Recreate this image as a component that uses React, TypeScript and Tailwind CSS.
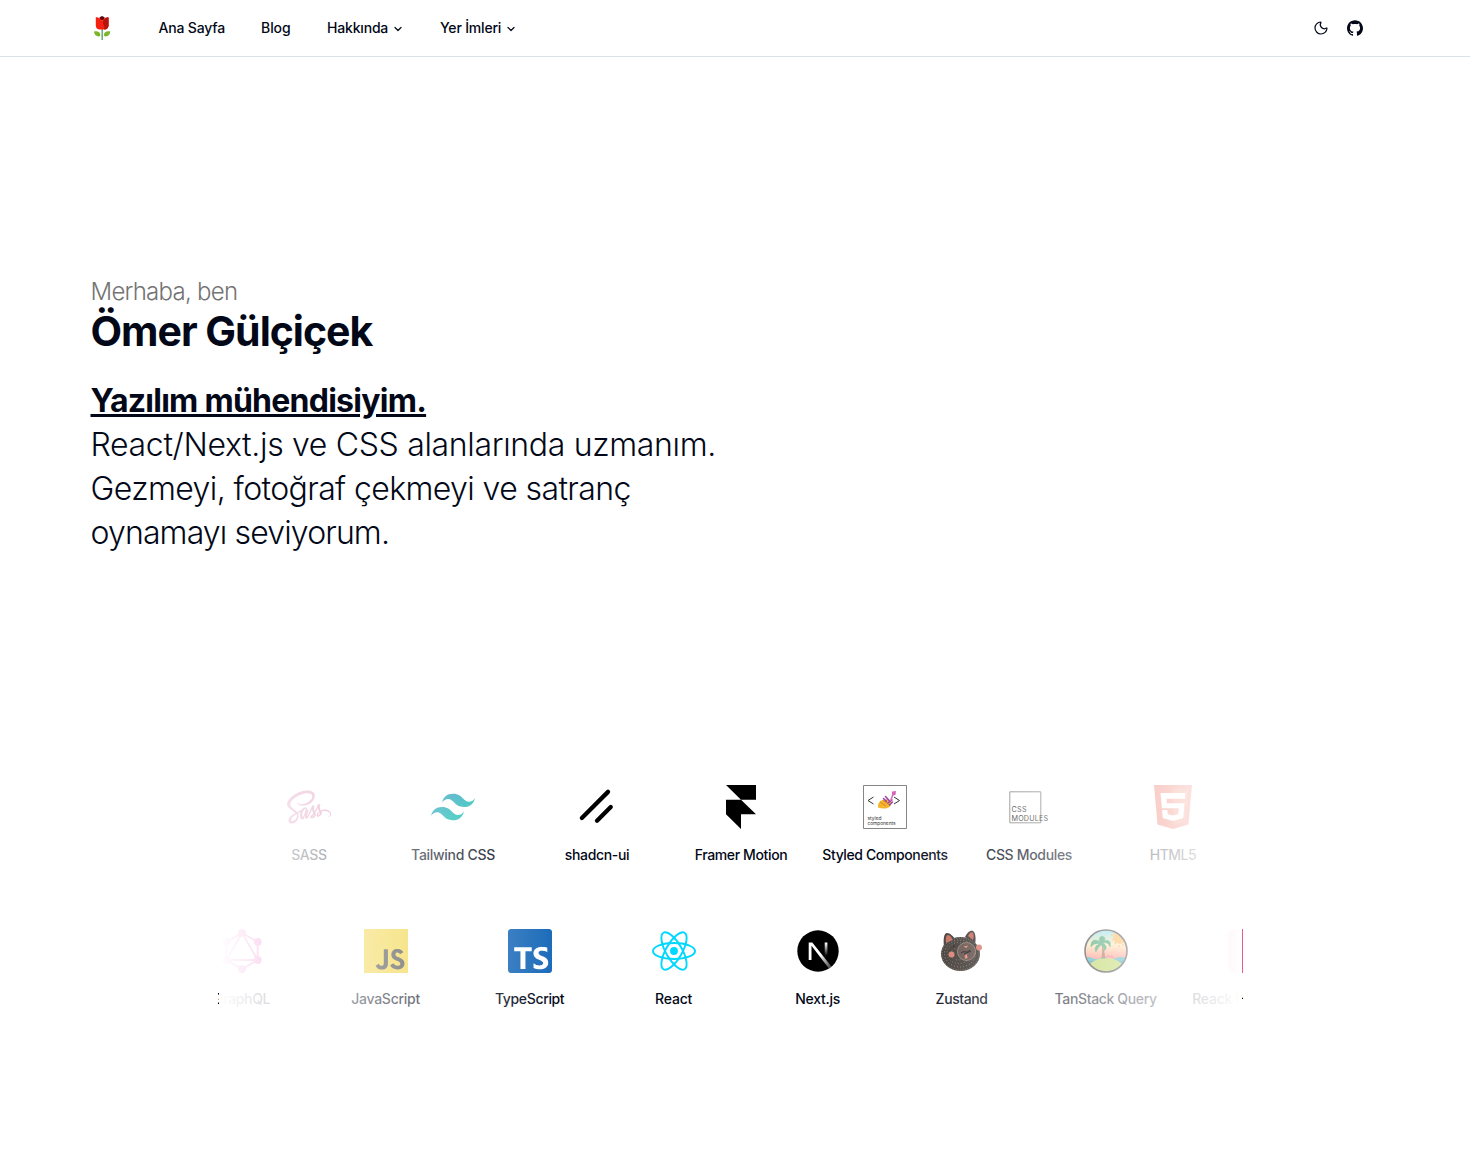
import React from "react";
import { ChevronDown, Moon } from "lucide-react";
import { FaSass } from "react-icons/fa";
import { SiGithub, SiGraphql, SiJavascript, SiTypescript } from "react-icons/si";

function Tulip() {
  return (
    <svg viewBox="0 0 24 24" className="size-6">
      <path d="M11.6 12h1.100v12h-1.100z" fill="#2e8b3d" />
      <path d="M4 15.500c3.800-.8 6.300.7 6.300 3.300 0 1-.5 1.700-1.600 1.600C5.800 20.200 4.200 18.600 4 15.500z" fill="#7cb52e" />
      <path d="M20.300 15.500c-3.800-.8-6.300.7-6.300 3.300 0 1 .5 1.700 1.600 1.600 2.900-.2 4.500-1.800 4.700-4.900z" fill="#7cb52e" />
      <path d="M9.600 1.200 12 0l2.600 1.200L14 4h-4z" fill="#5c0a14" />
      <path d="M5.800 1.200c2 0 3.600.5 5 2l1.300 1.200L15 2c1-.7 2.200-.8 3.600-.6v8.200c0 2.400-1.600 3.900-4 3.900H10c-2.600 0-4.200-1.500-4.200-4z" fill="#f5200f" />
      <path d="M18.600 1.400C15.300 1.200 13.500 3 13 6c-.4 3 2.400 3 1 7.500h.6c2.400 0 4-1.500 4-3.900z" fill="#b3150c" />
    </svg>
  );
}

function Tailwind() {
  return (
    <svg viewBox="0 0 24 24" className="size-11">
      <defs>
        <linearGradient id="tw" x1="0" y1="0" x2="1" y2="1">
          <stop offset="0" stopColor="#1f90bb" />
          <stop offset="1" stopColor="#08c9ac" />
        </linearGradient>
      </defs>
      <path fill="url(#tw)" d="M12.001 4.800c-3.200 0-5.200 1.600-6 4.800 1.200-1.600 2.600-2.200 4.200-1.800.913.228 1.565.89 2.288 1.624C13.666 10.618 15.027 12 18.001 12c3.200 0 5.200-1.600 6-4.800-1.200 1.600-2.600 2.200-4.200 1.800-.913-.228-1.565-.89-2.288-1.624C16.337 6.182 14.976 4.800 12.001 4.800zm-6 7.200c-3.200 0-5.200 1.600-6 4.800 1.200-1.600 2.600-2.200 4.200-1.800.913.228 1.565.89 2.288 1.624 1.177 1.194 2.538 2.576 5.512 2.576 3.200 0 5.200-1.600 6-4.800-1.200 1.600-2.600 2.200-4.200 1.800-.913-.228-1.565-.89-2.288-1.624C10.337 13.382 8.976 12 6.001 12z" />
    </svg>
  );
}

function Shadcn() {
  return (
    <svg viewBox="0 0 256 256" className="size-11" stroke="#000" strokeWidth="25" strokeLinecap="round">
      <path d="M208 128l-80 80M192 40L40 192" />
    </svg>
  );
}

function Framer() {
  return (
    <svg viewBox="0 0 44 44" className="size-11">
      <path d="M7 0h30v14.700H22zM7 14.700h15l15 14.600H22V44L7 29.300z" />
    </svg>
  );
}

function StyledComponents() {
  return (
    <svg viewBox="0 0 44 44" className="size-11">
      <path d="M.5.500h43v43H.5z" fill="#fff" stroke="#666" strokeWidth=".8" />
      <path d="M10.500 12l-5.500 3.500 5.500 3.500M31 12l5.500 3.500L31 19" fill="none" stroke="#333" />
      <path d="M15 22.500c-.5-4.500 2-7 6-8l4.500-.5 3 2.500-1 4.500c-2 2.500-7 3.500-12.500 1.500z" fill="#f5b62e" />
      <path d="M17 17l6 4M20 15.500l6 4" stroke="#d88a20" />
      <path d="M20.500 13.500l3 3M22.500 11.500l4 4.500M25 18l4-3M26.500 20l3-3" stroke="#9b3fb0" strokeWidth="1.500" strokeLinecap="round" />
      <path d="M27.500 16l3-8" stroke="#d070bd" strokeWidth="1.600" />
      <path d="M29 6.500l4-.5-.5 4-3.500.5z" fill="#d766bb" />
      <text x="4.500" y="34.500" fontFamily="Inter, sans-serif" fontSize="4.800" fill="#333" textLength="14">styled</text>
      <text x="4.500" y="39.700" fontFamily="Inter, sans-serif" fontSize="4.800" fill="#333" textLength="28">components</text>
    </svg>
  );
}

function CssModules() {
  return (
    <svg viewBox="0 0 44 44" className="size-11 overflow-visible">
      <path d="M2.800 6.800h31v31h-31z" fill="none" stroke="#777" />
      <text x="4.500" y="26.500" fontFamily="Inter, sans-serif" fontSize="7.200" fill="#111" textLength="15">CSS</text>
      <text x="4.500" y="35.800" fontFamily="Inter, sans-serif" fontSize="7.200" fill="#111" textLength="36.500">MODULES</text>
    </svg>
  );
}

function Html5() {
  return (
    <svg viewBox="0 0 44 44" className="size-11">
      <path d="M3 0h38l-3.500 39.500L22 44 6.500 39.500z" fill="#e8402a" />
      <path d="M22 3.500h15.300l-3 33.300L22 40.300z" fill="#f0583a" />
      <path d="M9.500 8h25l-.5 5.700H15.500l.4 4.500h17.700L32.200 33 22 36l-10.200-3-.7-8h5.300l.3 4 5.300 1.500 5.300-1.500.5-5.700H11z" fill="#fff" />
    </svg>
  );
}

function ReactLogo() {
  return (
    <svg viewBox="-11.500 -11.500 23 23" className="size-11" fill="none" stroke="#00d8ff">
      <circle r="2.050" fill="#00d8ff" stroke="none" />
      <ellipse rx="11" ry="4.200" />
      <ellipse rx="11" ry="4.200" transform="rotate(60)" />
      <ellipse rx="11" ry="4.200" transform="rotate(120)" />
    </svg>
  );
}

function NextLogo() {
  return (
    <svg viewBox="0 0 44 44" className="size-11">
      <defs>
        <linearGradient id="na" x1="24" y1="26" x2="34" y2="38" gradientUnits="userSpaceOnUse">
          <stop stopColor="#fff" />
          <stop offset="1" stopColor="#fff" stopOpacity="0.300" />
        </linearGradient>
        <linearGradient id="nb" x1="30" y1="14" x2="30" y2="27" gradientUnits="userSpaceOnUse">
          <stop stopColor="#fff" />
          <stop offset="1" stopColor="#fff" stopOpacity="0" />
        </linearGradient>
      </defs>
      <circle cx="22" cy="22" r="20.700" />
      <path d="M12.700 13.500h3.600l19.300 24.300-2.500 1.900-17.600-23V31h-2.800z" fill="url(#na)" />
      <path d="M28.700 13.500h2.700V31h-2.700z" fill="url(#nb)" />
    </svg>
  );
}

function Bear() {
  return (
    <svg viewBox="0 0 44 44" className="size-11">
      <g fill="#352e2a">
        <ellipse cx="20.500" cy="25" rx="19.500" ry="17" />
        <path d="M4 18C3 10 4 4 7 4c3 0 6 3 8 6zM25 8c2-4 5-7 8-6 3 2 3 9 2 14z" />
      </g>
      <path d="M6 14c-.5-5 0-8 2-8s4 3 4.500 5zM28 7c1.500-3 3-4.500 4.500-3.500S34 8 33 11z" fill="#c46456" />
      <g fill="none" stroke="#948980" strokeWidth=".9">
        <ellipse cx="20.500" cy="25" rx="18.500" ry="16" strokeDasharray=".8 1.600" />
        <ellipse cx="20" cy="24.500" rx="15.500" ry="13.500" strokeDasharray="1 2.100" />
        <ellipse cx="19" cy="24" rx="12" ry="10.500" strokeDasharray=".7 2.300" />
        <ellipse cx="18" cy="25" rx="7" ry="6" strokeDasharray=".8 3" />
      </g>
      <circle cx="26.500" cy="22.500" r="9" fill="#594640" stroke="#9a8379" strokeWidth=".8" />
      <circle cx="11.500" cy="25.500" r="3" fill="#d8786b" />
      <circle cx="39" cy="18.500" r="3" fill="#d8786b" />
      <path d="M23.500 17.500l4.500-1-1.500 2.500zM24.500 27l2.500-2 .5 4-2 1z" fill="#ee8070" />
      <path d="M21 24c3-3 5 1 9-3M24 25l7-3M14 16v3" stroke="#15100e" fill="none" />
    </svg>
  );
}

function Island() {
  return (
    <svg viewBox="0 0 44 44" className="size-11">
      <defs>
        <linearGradient id="sky" x1="0" y1="0" x2="0" y2="1">
          <stop stopColor="#58d2ec" />
          <stop offset=".35" stopColor="#ffdf9a" />
          <stop offset=".7" stopColor="#ff6257" />
        </linearGradient>
        <clipPath id="disc"><circle cx="22" cy="22" r="20.500" /></clipPath>
      </defs>
      <g clipPath="url(#disc)">
        <path d="M0 0h44v44H0z" fill="url(#sky)" />
        <circle cx="36" cy="8" r="6.800" fill="#ff9f1a" />
        <path d="M27 6h1.500M28 11l1.500-1M31 15l1-2M35 18v-2M39 17v-2" stroke="#ff8a10" strokeWidth="1.300" />
        <path d="M0 29q4-2 8 0t8 0 8 0 8 0 12 0v15H0z" fill="#0e9aae" />
        <path d="M0 32.500h44" stroke="#077089" />
        <ellipse cx="22" cy="39.500" rx="17" ry="10.500" fill="#a9c932" />
        <path d="M17 14c2 5 1 11 .5 15.500h3.800c-.5-5-1.300-11-4.300-15.500z" fill="#84481c" />
        <path d="M17 14C11 8 6 12 7 18c2-3 5-4 9-3-5 1-6 5-4 8 1-3 3-5 5-7 2 1 4 4 3 6 4-3 2-6-1-8 4-1 6 1 7 4 2-5-2-8-6-6 2-2 1-4-2-5-3 1-4 4-1 7z" fill="#108a4c" stroke="#108a4c" strokeWidth=".5" />
        <path d="M22 29l2-3 2 2 2-1 1 2" stroke="#ef2b5b" fill="none" />
      </g>
      <circle cx="22" cy="22" r="21" fill="none" stroke="#111" strokeWidth="1.600" />
    </svg>
  );
}

type Tech = { name: string; icon: React.ReactNode; tracking: string };

const styling: Tech[] = [
  { name: "SASS", icon: <FaSass className="size-11 text-[#cf649a]" />, tracking: "tracking-[-0.3px]" },
  { name: "Tailwind CSS", icon: <Tailwind />, tracking: "tracking-[-0.3px]" },
  { name: "shadcn-ui", icon: <Shadcn />, tracking: "tracking-[-0.35px]" },
  { name: "Framer Motion", icon: <Framer />, tracking: "tracking-[-0.37px]" },
  { name: "Styled Components", icon: <StyledComponents />, tracking: "tracking-[-0.38px]" },
  { name: "CSS Modules", icon: <CssModules />, tracking: "tracking-[-0.33px]" },
  { name: "HTML5", icon: <Html5 />, tracking: "tracking-[-0.5px]" },
];

const scripting: Tech[] = [
  { name: "GraphQL", icon: <SiGraphql className="size-11 text-[#e10098]" />, tracking: "tracking-[-0.35px]" },
  { name: "JavaScript", icon: <span className="size-11 bg-[#323330]"><SiJavascript className="size-11 text-[#f0d030]" /></span>, tracking: "tracking-[-0.25px]" },
  { name: "TypeScript", icon: <span className="size-11 rounded-[4px] bg-white"><SiTypescript className="size-11 rounded-[3px] text-[#1768b8]" /></span>, tracking: "tracking-[-0.35px]" },
  { name: "React", icon: <ReactLogo />, tracking: "tracking-[-0.2px]" },
  { name: "Next.js", icon: <NextLogo />, tracking: "tracking-[-0.28px]" },
  { name: "Zustand", icon: <Bear />, tracking: "tracking-[-0.4px]" },
  { name: "TanStack Query", icon: <Island />, tracking: "tracking-[-0.35px]" },
  { name: "Reack Hook Form", icon: <span className="size-11 rounded-[7px] bg-[#ec5990]" />, tracking: "tracking-[-0.2px]" },
];

function Strip({ items }: { items: Tech[] }) {
  return (
    <div className="flex h-36">
      {items.map((t) => (
        <div key={t.name} className="flex w-36 shrink-0 flex-col items-center gap-4 pt-6">
          {t.icon}
          <span className={"text-sm leading-5 font-medium whitespace-nowrap " + t.tracking}>{t.name}</span>
        </div>
      ))}
    </div>
  );
}

export default function App() {
  return (
    <div className="h-[1156px] overflow-hidden bg-white font-['Inter',sans-serif] text-[#020817]">
      <header className="h-[57px] border-b border-[#d9e2e9]">
        <div className="flex h-14 items-center pr-[107.5px] pl-[90px] text-sm font-medium">
          <Tulip />
          <nav className="ml-[44.5px] flex items-center gap-9 tracking-[-0.18px]">
            <a className="w-[66.500px] whitespace-nowrap">Ana Sayfa</a>
            <a className="w-[30px] tracking-[-0.05px]">Blog</a>
            <a className="flex w-[77px] items-center justify-between whitespace-nowrap">Hakkında<ChevronDown className="relative top-px size-3" strokeWidth={2.400} /></a>
            <a className="flex w-[77px] items-center justify-between whitespace-nowrap">Yer İmleri<ChevronDown className="relative top-px size-3" strokeWidth={2.400} /></a>
          </nav>
          <div className="ml-auto flex items-center gap-[18px]">
            <Moon className="size-4" strokeWidth={1.800} />
            <SiGithub className="size-4" />
          </div>
        </div>
      </header>
      <main>
        <section className="h-[704px] pt-[219px] pl-[90.500px]">
          <p className="text-2xl leading-8 font-light tracking-[-0.73px] text-[#737373]">Merhaba, ben</p>
          <h1 className="text-[41px] leading-[46px] font-bold tracking-[-1px]">Ömer Gülçiçek</h1>
          <div className="mt-[25px] w-[680px] text-[32px] leading-[44px] font-light">
            <p className="font-bold tracking-[-0.74px] underline">Yazılım mühendisiyim.</p>
            <p className="tracking-[-0.33px]">React/Next.js ve CSS alanlarında uzmanım.</p>
            <p className="tracking-[-0.6px]">Gezmeyi, fotoğraf çekmeyi ve satranç</p>
            <p className="tracking-[-0.86px]">oynamayı seviyorum.</p>
          </div>
        </section>
        <section className="relative ml-[218px] w-[1025px] overflow-hidden">
          <div className="ml-[19px]"><Strip items={styling} /></div>
          <div className="-ml-[48.400px]"><Strip items={scripting} /></div>
          <div className="absolute inset-y-0 left-px w-1/3 bg-linear-to-r from-white to-transparent" />
          <div className="absolute inset-y-0 right-px w-1/3 bg-linear-to-l from-white to-transparent" />
        </section>
      </main>
    </div>
  );
}
